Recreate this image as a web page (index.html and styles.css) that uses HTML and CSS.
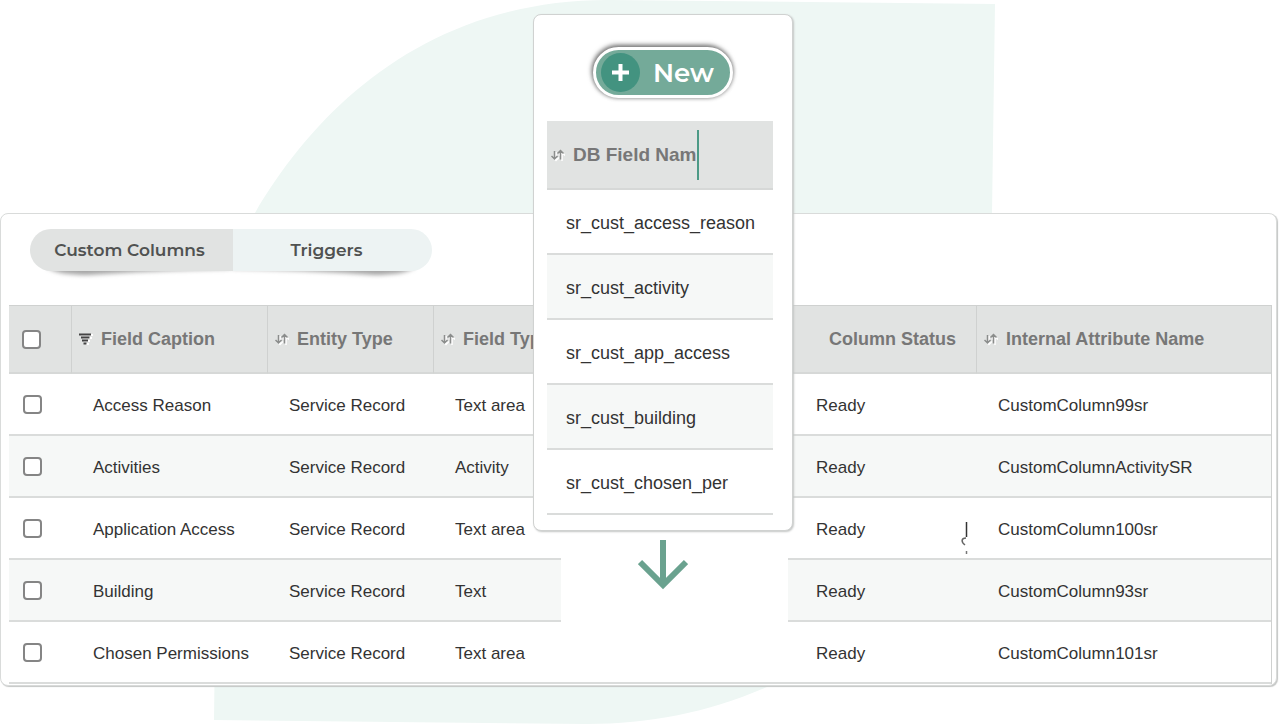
FILE: index.html
```html
<!DOCTYPE html>
<html lang="en">
<head>
  <meta charset="UTF-8">
  <meta name="viewport" content="width=device-width, initial-scale=1.0">
  <title>Custom Columns</title>
  <link rel="stylesheet" href="styles.css">
</head>
<body>
  <!-- Icons -->
  <svg class="sprite" aria-hidden="true">
    <symbol id="sort" viewBox="0 0 14 14">
      <path d="M5 4v9M2 9.500l3 3 3-3M11 13V4M8 7.500l3-3 3 3" fill="none" stroke="#fff" stroke-width="1.500"/>
      <path d="M3.500 3v8M.5 8l3 3 3-3M9.500 11.500V3M6.500 5.500l3-3 3 3" fill="none" stroke="#8b8d8c" stroke-width="1.500"/>
    </symbol>
    <symbol id="filter" viewBox="0 0 14 14">
      <path d="M2 3h12M4 6h9M5 9h6M7 12h3" stroke="#fff" stroke-width="2"/>
      <path d="M0 2.500h12M2 5.500h8.500M3 8.500h6M4.500 11.500h3" stroke="#444" stroke-width="2"/>
    </symbol>
  </svg>

  <main class="page">
    <svg class="backdrop" width="1000" height="727" viewBox="0 0 1000 727" aria-hidden="true">
      <path d="M608 0L995 4L992 213C985 450 900 620 767 687C710 712 650 724 587 724L214 720L215 640C215 480 210 320 255 213C318 105 430 0 608 0Z" fill="#eef7f4"/>
    </svg>

    <!-- Columns list -->
    <section class="panel">
      <div class="tabs">
        <svg class="tabs-shadow" width="402" height="20" viewBox="0 0 402 20" aria-hidden="true">
          <defs>
            <filter id="soft" x="-10%" y="-100%" width="120%" height="300%"><feGaussianBlur stdDeviation="2"/></filter>
          </defs>
          <path d="M18 0H200V4C150 5 100 7 58 10C40 10 26 8 18 3ZM202 0H384V3C376 8 362 10 344 10C302 7 252 5 202 4Z" fill="#a6a6a6" filter="url(#soft)"/>
        </svg>
        <button class="tab active" type="button">Custom Columns</button>
        <button class="tab" type="button">Triggers</button>
      </div>

      <table class="grid">
        <colgroup>
          <col class="col-check">
          <col class="col-caption">
          <col class="col-entity">
          <col class="col-type">
          <col class="col-db">
          <col class="col-status">
          <col>
        </colgroup>
        <thead>
          <tr>
            <th><input class="check" type="checkbox" aria-label="Select all"></th>
            <th><span class="head"><svg class="icon"><use href="#filter"/></svg>Field Caption</span></th>
            <th><span class="head"><svg class="icon"><use href="#sort"/></svg>Entity Type</span></th>
            <th><span class="head"><svg class="icon"><use href="#sort"/></svg>Field Type</span></th>
            <th class="plain"></th>
            <th class="plain status">Column Status</th>
            <th><span class="head"><svg class="icon"><use href="#sort"/></svg>Internal Attribute Name</span></th>
          </tr>
        </thead>
        <tbody>
          <tr>
            <td><input class="check" type="checkbox" aria-label="Select Access Reason"></td>
            <td>Access Reason</td>
            <td>Service Record</td>
            <td>Text area</td>
            <td class="gap"></td>
            <td class="status">Ready</td>
            <td>CustomColumn99sr</td>
          </tr>
          <tr>
            <td><input class="check" type="checkbox" aria-label="Select Activities"></td>
            <td>Activities</td>
            <td>Service Record</td>
            <td>Activity</td>
            <td class="gap"></td>
            <td class="status">Ready</td>
            <td>CustomColumnActivitySR</td>
          </tr>
          <tr>
            <td><input class="check" type="checkbox" aria-label="Select Application Access"></td>
            <td>Application Access</td>
            <td>Service Record</td>
            <td>Text area</td>
            <td class="gap"></td>
            <td class="status">
              <span class="status-cell">Ready
                <svg class="mark" width="10" height="36" viewBox="0 0 10 36" aria-hidden="true">
                  <path d="M6.500 2V17" stroke="#333" stroke-width="1.500"/>
                  <path d="M6 18C1 18 1 22 5 25" fill="none" stroke="#666" stroke-width="1.500"/>
                  <path d="M6.500 31v3" stroke="#777" stroke-width="1.500"/>
                </svg>
              </span>
            </td>
            <td>CustomColumn100sr</td>
          </tr>
          <tr>
            <td><input class="check" type="checkbox" aria-label="Select Building"></td>
            <td>Building</td>
            <td>Service Record</td>
            <td>Text</td>
            <td class="gap"></td>
            <td class="status">Ready</td>
            <td>CustomColumn93sr</td>
          </tr>
          <tr>
            <td><input class="check" type="checkbox" aria-label="Select Chosen Permissions"></td>
            <td>Chosen Permissions</td>
            <td>Service Record</td>
            <td>Text area</td>
            <td class="gap"></td>
            <td class="status">Ready</td>
            <td>CustomColumn101sr</td>
          </tr>
        </tbody>
      </table>
    </section>

    <!-- New column being inserted -->
    <aside class="insert">
      <div class="card">
        <button class="new-btn" type="button">
          <svg class="plus" width="39" height="39" viewBox="0 0 39 39" aria-hidden="true">
            <circle cx="19.500" cy="19.500" r="19.500" fill="#439380"/>
            <path d="M11 19.500h17M19.500 11v17" stroke="#fff" stroke-width="4"/>
          </svg>
          New
        </button>
        <table class="fields">
          <thead>
            <tr>
              <th><span class="head"><svg class="icon"><use href="#sort"/></svg><input class="name-input" type="text" value="DB Field Nam" aria-label="Column name"></span></th>
            </tr>
          </thead>
          <tbody>
            <tr><td>sr_cust_access_reason</td></tr>
            <tr><td>sr_cust_activity</td></tr>
            <tr><td>sr_cust_app_access</td></tr>
            <tr><td>sr_cust_building</td></tr>
            <tr><td>sr_cust_chosen_per</td></tr>
          </tbody>
        </table>
      </div>
      <svg class="arrow" width="50" height="50" viewBox="0 0 50 50" aria-hidden="true">
        <path d="M25 0V44M2 22L25 45L48 22" fill="none" stroke="#6aa28f" stroke-width="6"/>
      </svg>
    </aside>
  </main>
</body>
</html>
```
FILE: styles.css
```css
* {
  box-sizing: border-box;
}
body {
  margin: 0;
  background: #fff;
  color: #333;
  font-family: "Liberation Sans", Arial, sans-serif;
  font-size: 17px;
}
.sprite {
  display: none;
}
.page {
  position: relative;
  padding: 213px 2px 40px 0;
}
.backdrop {
  position: absolute;
  top: 0;
  left: 0;
}

/* Panel */
.panel {
  position: relative;
  padding: 15px 4px 1px 8px;
  background: #fff;
  border: 1px solid #d9dbda;
  border-radius: 8px;
  box-shadow: 1px 1px 1px #c4c6c5;
}
.tabs {
  position: relative;
  display: flex;
  width: 402px;
  height: 42px;
  margin: 0 0 34px 21px;
}
.tabs-shadow {
  position: absolute;
  top: 36px;
  left: 0;
}
.tab {
  position: relative;
  flex: 1;
  padding: 0 12px 0 0;
  border: none;
  border-radius: 0 21px 21px 0;
  background: #edf3f3;
  color: #505251;
  font-family: Montserrat, Inter, sans-serif;
  font-size: 17px;
  font-weight: 600;
  cursor: pointer;
}
.tab.active {
  flex: 0 0 203px;
  padding: 0 4px 0 0;
  border-radius: 21px 0 0 21px;
  background: #e1e3e2;
}

/* Tables */
.grid,
.fields {
  width: 100%;
  table-layout: fixed;
  border-collapse: separate;
  border-spacing: 0;
}
.grid {
  border-right: 1px solid #cfd1d0;
}
.col-check {
  width: 62px;
}
.col-caption {
  width: 196px;
}
.col-entity {
  width: 166px;
}
.col-type {
  width: 128px;
}
.col-db {
  width: 227px;
}
.col-status {
  width: 188px;
}
th {
  height: 69px;
  padding: 0 0 0 7px;
  background: #e1e3e2;
  border-top: 1px solid #cfd1d0;
  border-bottom: 2px solid #d6d8d7;
  color: #777;
  font-size: 18px;
  text-align: left;
  white-space: nowrap;
}
.grid th {
  border-left: 1px solid #cfd1d0;
}
.grid th:first-child {
  padding-left: 13px;
  border-left: none;
}
.grid th.plain {
  border-left: none;
}
.grid th.status {
  padding-left: 41px;
}
td {
  height: 62px;
  padding: 4px 0 0 22px;
  border-bottom: 2px solid #dadcdb;
  white-space: nowrap;
}
tr:nth-child(even) td {
  background: #f6f8f7;
}
.grid td:first-child {
  padding: 0 0 0 14px;
}
.grid td.status {
  padding-left: 28px;
}
.grid td.gap {
  background: #fff;
  border-bottom: none;
}
.grid tr:last-child td {
  border-bottom: 2px solid #dadcdb;
}
.head {
  display: flex;
  align-items: center;
  gap: 8px;
}
.icon {
  flex: none;
  width: 14px;
  height: 14px;
}
.check {
  appearance: none;
  display: block;
  width: 19px;
  height: 19px;
  margin: 0;
  border: 2px solid #858585;
  border-radius: 4px;
  background: #fff;
}
.status-cell {
  position: relative;
  display: block;
}
.mark {
  position: absolute;
  top: 0;
  right: 6px;
}

/* Inserted column */
.insert {
  position: absolute;
  top: 14px;
  left: 533px;
  width: 260px;
  display: flex;
  flex-direction: column;
  align-items: center;
  gap: 9px;
}
.card {
  width: 100%;
  padding: 32px 19px 15px 13px;
  background: #fff;
  border: 1px solid #d0d2d1;
  border-radius: 8px;
  box-shadow: 1px 1px 2px #c4c6c5;
}
.new-btn {
  display: flex;
  align-items: center;
  gap: 13px;
  width: 140px;
  height: 51px;
  margin: 0 0 23px 46px;
  padding: 0 5px;
  border: 3px solid #fff;
  border-radius: 26px;
  background: #74aa99;
  box-shadow: -1px -2px 5px #777, 0 0 4px #999;
  color: #fff;
  font-family: Montserrat, Inter, sans-serif;
  font-size: 26px;
  font-weight: 600;
  cursor: pointer;
}
.plus {
  flex: none;
}
.fields th {
  padding-left: 4px;
  border-top: none;
}
.fields td {
  height: 65px;
  padding-left: 19px;
  font-size: 18px;
}
.name-input {
  width: 126px;
  height: 50px;
  padding: 0;
  border: none;
  border-right: 2px solid #4c9a86;
  border-radius: 0;
  background: none;
  color: #777;
  font: bold 19px "Liberation Sans", Arial, sans-serif;
}
```
